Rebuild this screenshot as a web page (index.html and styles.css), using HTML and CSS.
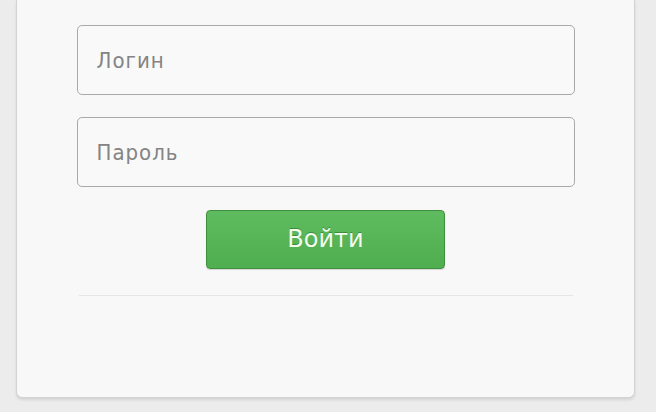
FILE: index.html
```html
<!DOCTYPE html>
<html lang="ru">
<head>
    <meta charset="UTF-8">
    <meta name="viewport" content="width=device-width, initial-scale=1.0">
    <title>Вход</title>
    <link rel="stylesheet" href="styles.css">
</head>
<body>
    <div class="login-box col-box">
        <form class="login-form col-box">
            <input class="field" type="text" placeholder="Логин">
            <input class="field" type="password" placeholder="Пароль">
            <button class="btn-login" type="button">Войти</button>
            <div class="divider"></div>
        </form>
    </div>
</body>
</html>
```
FILE: styles.css
```css
.col-box{display: -webkit-flex;display: flex;flex-direction:column;flex-wrap: nowrap;}

html,body{margin: 0;padding: 0;height: 100%;}
body{background: #ececec;font-family: "DejaVu Sans Condensed","DejaVu Sans",sans-serif;padding: 0 21px 0 16px;box-sizing: border-box;}

.login-box{height: 398px;background: #f8f8f8;border: 1px solid #d2d2d2;border-top: none;border-radius: 0 0 6px 6px;box-shadow: 0 2px 3px rgba(0,0,0,.1);box-sizing: border-box;}

.login-form{align-items: center;padding-top: 25px;}

.field{width: 498px;height: 70px;box-sizing: border-box;border: 1px solid #a9a9a9;border-radius: 5px;background: #f9f9f9;padding: 0 19px;font-family: inherit;font-size: 22px;letter-spacing: 1px;color: #555;outline: none;margin-bottom: 22px;}
.field::placeholder{color: #848484;}

.btn-login{width: 239px;height: 59px;margin-top: 1px;padding: 0 0 2px;border: 1px solid #3f8f3f;border-radius: 4px;background: linear-gradient(#5fbb5f,#4fae4f);color: #f2fdee;font-family: "DejaVu Sans",sans-serif;font-size: 24px;text-shadow: 0 -1px 0 rgba(0,60,0,.35);cursor: pointer;box-shadow: 0 1px 1px rgba(0,0,0,.15);}

.divider{width: 494px;height: 1px;background: #e6e6e6;margin-top: 26px;}
```
